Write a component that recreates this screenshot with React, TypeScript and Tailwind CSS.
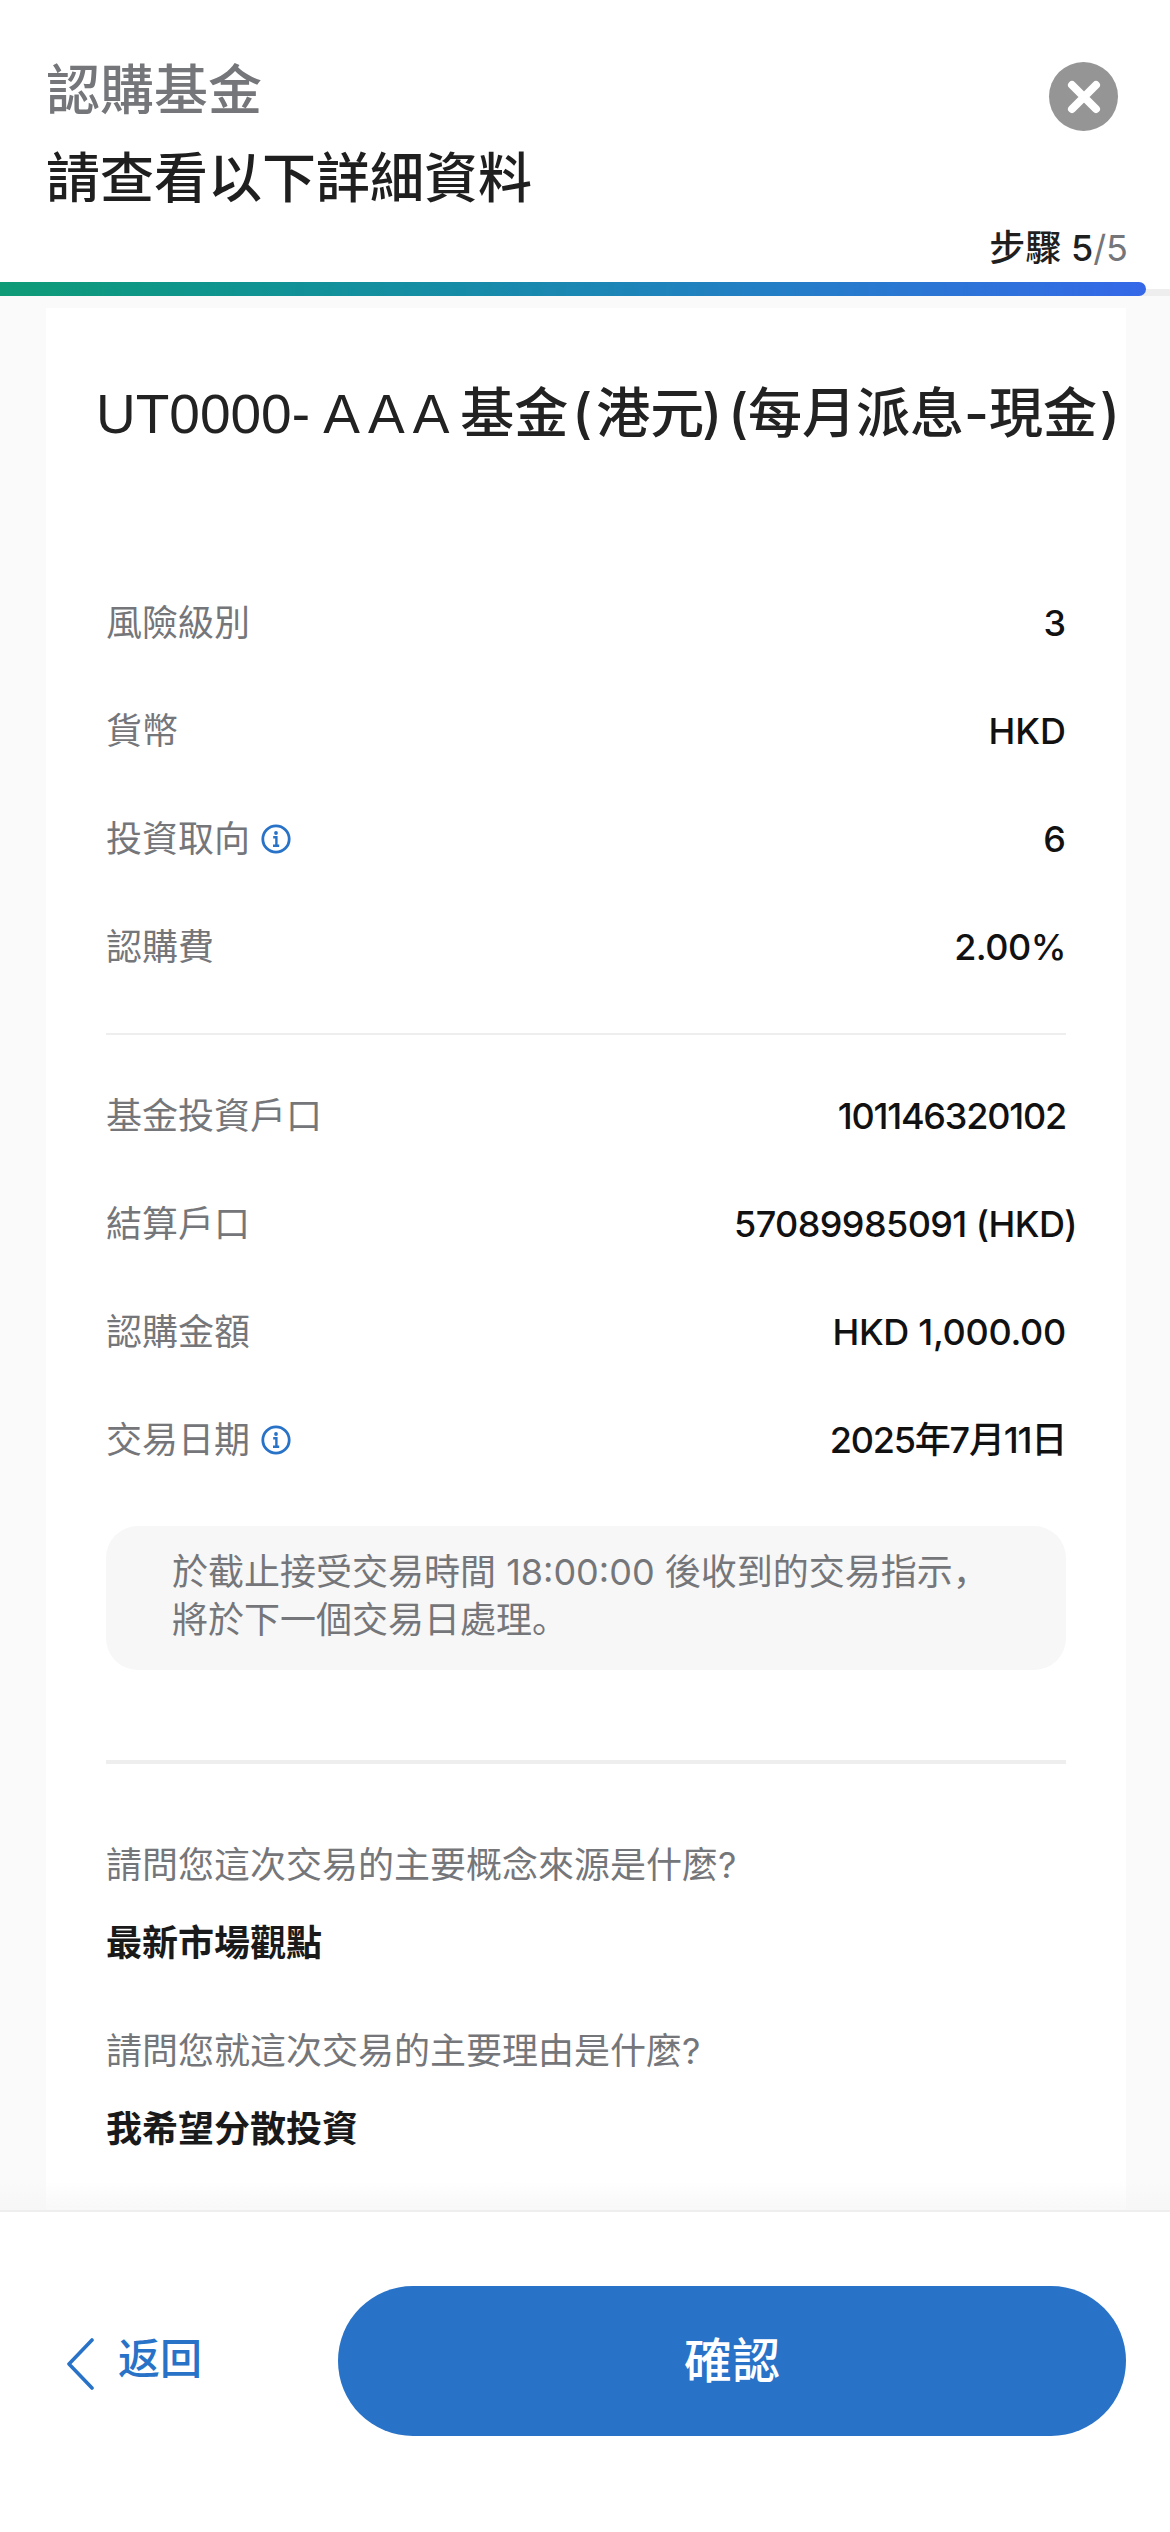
const FONT = "font-['Inter','Noto_Sans_CJK_SC','Noto_Sans_CJK_TC',sans-serif]";

function InfoIcon() {
  return (
    <svg viewBox="0 0 30 30" className="w-[30px] h-[30px] shrink-0" fill="none">
      <circle cx="15" cy="15" r="13.2" stroke="#2872c8" strokeWidth="2.8" />
      <circle cx="15" cy="9" r="1.9" fill="#2872c8" />
      <path d="M12.2 13.2H15.4V21.4M12 21.8H18.2" stroke="#2872c8" strokeWidth="2.4" />
    </svg>
  );
}

interface RowData {
  label: string;
  value: string;
  info?: boolean;
  valueClass?: string;
}

function Row({ label, value, info, valueClass }: RowData) {
  return (
    <div className="flex items-center justify-between h-[108px]">
      <div className="flex items-center gap-[11px] text-[36px] text-[#75767a]">
        <span>{label}</span>
        {info && <InfoIcon />}
      </div>
      <span className={`text-[36px] font-medium text-[#111111] ${valueClass ?? ''}`}>{value}</span>
    </div>
  );
}

const fundRows: RowData[] = [
  { label: '風險級別', value: '3' },
  { label: '貨幣', value: 'HKD' },
  { label: '投資取向', value: '6', info: true },
  { label: '認購費', value: '2.00%', valueClass: 'tracking-[-0.5px]' },
];

const accountRows: RowData[] = [
  { label: '基金投資戶口', value: '101146320102', valueClass: 'tracking-[-1.2px]' },
  { label: '結算戶口', value: '57089985091 (HKD)', valueClass: 'tracking-[-0.6px] -mr-[11px]' },
  { label: '認購金額', value: 'HKD 1,000.00', valueClass: 'tracking-[-0.3px]' },
  { label: '交易日期', value: '2025年7月11日', info: true, valueClass: 'tracking-[-1.2px]' },
];

const answers = [
  { q: '請問您這次交易的主要概念來源是什麼?', a: '最新市場觀點' },
  { q: '請問您就這次交易的主要理由是什麼?', a: '我希望分散投資' },
];

export default function App() {
  return (
    <div className={`${FONT} w-[1170px] h-[2532px] flex flex-col bg-white overflow-hidden`}>
      {/* header */}
      <div className="relative h-[282px] shrink-0 pl-[46px] pt-[60px]">
        <div className="text-[54px] leading-[62px] font-medium text-[#75767a]">認購基金</div>
        <div className="mt-[26px] text-[54px] leading-[62px] font-medium text-[#1f1f1f]">請查看以下詳細資料</div>
        <button className="absolute right-[52px] top-[62px] w-[69px] h-[69px] rounded-full bg-[#959595] flex items-center justify-center">
          <svg viewBox="0 0 36 36" className="w-[36px] h-[36px]" fill="none">
            <path d="M6 6L30 30M30 6L6 30" stroke="#fff" strokeWidth="8" strokeLinecap="round" />
          </svg>
        </button>
        <div className="absolute right-[42px] top-[226px] text-[36px] leading-[44px] font-medium text-[#1f1f1f]">
          步驟 5<span className="font-normal text-[#75767a]">/5</span>
        </div>
      </div>

      {/* progress */}
      <div className="relative h-[14px] shrink-0">
        <div className="absolute left-0 right-0 bottom-0 h-[7px] bg-[#eeeeee]" />
        <div className="absolute left-0 top-0 h-[14px] w-[1146px] rounded-r-full bg-gradient-to-r from-[#0f9b76] to-[#3568e8]" />
      </div>

      {/* body */}
      <div className="relative flex-1 min-h-0 bg-[#fafafa] pl-[46px] pr-[44px] pt-[12px] overflow-hidden">
        <div className="h-full bg-white px-[60px]">
          <div className="pt-[74px] h-[194px] -ml-[10px] -mr-[60px] whitespace-nowrap text-[54px] leading-[64px] font-medium text-[#222222]">
            <span className="font-['Liberation_Sans'] font-normal text-[55px]">
              UT0000- <span className="tracking-[8px] -ml-[2px]">AAA</span>
            </span>
            <span className="ml-[3px]">基金</span>
            <span className="mx-[4px]">(</span>港元<span className="-ml-[2px] mr-[6px]">)</span>(每月派息-現金
            <span className="ml-[3px]">)</span>
          </div>
          <div className="pt-[67px]">
            {fundRows.map(r => (
              <Row key={r.label} {...r} />
            ))}
          </div>
          <div className="mt-[32px] h-[2px] bg-[#eeeeee]" />
          <div className="pt-[27px]">
            {accountRows.map(r => (
              <Row key={r.label} {...r} />
            ))}
          </div>
          <div className="mt-[32px] h-[144px] rounded-[32px] bg-[#f7f7f7] pl-[66px] pt-[22px] text-[36px] leading-[48px] text-[#75767a]">
            於截止接受交易時間 18:00:00 後收到的交易指示，
            <br />
            將於下一個交易日處理。
          </div>
          <div className="mt-[90px] h-[4px] bg-[#eeeeee]" />
          <div className="pt-[75px]">
            {answers.map(x => (
              <div key={x.q} className="h-[186px]">
                <div className="text-[36px] leading-[52px] text-[#75767a]">{x.q}</div>
                <div className="mt-[26px] text-[36px] leading-[52px] font-bold text-[#1a1a1a]">{x.a}</div>
              </div>
            ))}
          </div>
        </div>
        <div className="absolute left-0 right-0 bottom-0 h-[30px] bg-gradient-to-b from-transparent to-[#f5f5f5]/70" />
      </div>

      {/* footer */}
      <div className="h-[322px] shrink-0 border-t-2 border-[#eeeeee] bg-white flex items-start pl-[66px] pr-[44px] pt-[74px]">
        <div className="flex items-center h-[150px] w-[272px] text-[#2872c8]">
          <svg viewBox="0 0 28 52" className="w-[28px] h-[52px] mt-[6px]" fill="none">
            <path d="M26 2L3 26L26 50" stroke="#2872c8" strokeWidth="3.6" strokeLinecap="round" strokeLinejoin="round" />
          </svg>
          <span className="ml-[24px] -mt-[6px] text-[42px] font-medium">返回</span>
        </div>
        <button className="flex-1 h-[150px] rounded-full bg-[#2872c8] text-white text-[48px] font-medium">確認</button>
      </div>
    </div>
  );
}
